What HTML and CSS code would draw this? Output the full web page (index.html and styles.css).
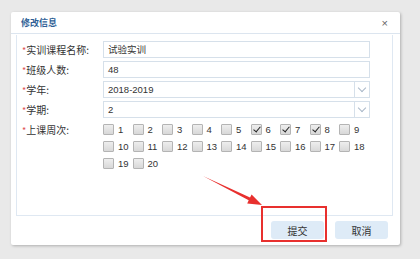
FILE: index.html
```html
<!DOCTYPE html>
<html lang="zh">
<head>
    <meta charset="UTF-8">
    <title>修改信息</title>
    <link rel="stylesheet" href="styles.css">
</head>
<body>
    <div class="dialog">
        <div class="dialog-header">
            <span class="dialog-title">修改信息</span>
            <span class="dialog-close">×</span>
        </div>

        <div class="panel">
            <div class="form-row">
                <label><i>*</i>实训课程名称:</label>
                <div class="field">试验实训</div>
            </div>
            <div class="form-row">
                <label><i>*</i>班级人数:</label>
                <div class="field">48</div>
            </div>
            <div class="form-row">
                <label><i>*</i>学年:</label>
                <div class="field select">2018-2019<span class="arrow"></span></div>
            </div>
            <div class="form-row">
                <label><i>*</i>学期:</label>
                <div class="field select">2<span class="arrow"></span></div>
            </div>
            <div class="form-row weeks-row">
                <label><i>*</i>上课周次:</label>
                <div class="weeks">
                    <span class="week"><b class="box"></b>1</span>
                    <span class="week"><b class="box"></b>2</span>
                    <span class="week"><b class="box"></b>3</span>
                    <span class="week"><b class="box"></b>4</span>
                    <span class="week"><b class="box"></b>5</span>
                    <span class="week"><b class="box checked"></b>6</span>
                    <span class="week"><b class="box checked"></b>7</span>
                    <span class="week"><b class="box checked"></b>8</span>
                    <span class="week"><b class="box"></b>9</span>
                    <span class="week"><b class="box"></b>10</span>
                    <span class="week"><b class="box"></b>11</span>
                    <span class="week"><b class="box"></b>12</span>
                    <span class="week"><b class="box"></b>13</span>
                    <span class="week"><b class="box"></b>14</span>
                    <span class="week"><b class="box"></b>15</span>
                    <span class="week"><b class="box"></b>16</span>
                    <span class="week"><b class="box"></b>17</span>
                    <span class="week"><b class="box"></b>18</span>
                    <span class="week"><b class="box"></b>19</span>
                    <span class="week"><b class="box"></b>20</span>
                </div>
            </div>
        </div>

        <div class="dialog-footer">
            <button class="btn">提交</button>
            <button class="btn">取消</button>
        </div>
    </div>

    <!-- annotation over the screenshot -->
    <div class="mark-box"></div>
    <svg class="mark-arrow" width="420" height="259" viewBox="0 0 420 259">
        <polygon points="203,176 250.05,197.55 251.6,194.4 262,205 247.2,203.4 248.7,200.25" fill="#e8302e"/>
    </svg>
</body>
</html>
```

FILE: styles.css
```css
body {
    margin: 0;
    width: 420px;
    height: 259px;
    background-color: #e9e9e9;
    font-family: "Liberation Sans", "Noto Sans CJK SC", sans-serif;
    color: #333;
    overflow: hidden;
    position: relative;
}

.dialog {
    margin: 12px 0 0 11px;
    width: 389px;
    height: 233px;
    background-color: #fff;
    border-radius: 2px;
    box-shadow: 1px 1px 3px rgba(0, 0, 0, 0.25);
    box-sizing: border-box;
    padding: 0 7px 0 5px;
}

.dialog-header {
    height: 21px;
    display: flex;
    align-items: center;
    justify-content: space-between;
    border-bottom: 1px solid #dce5ef;
    margin: 0 -7px 0 -5px;
    padding: 0 12px 0 10px;
}

.dialog-title {
    font-size: 9px;
    font-weight: bold;
    color: #2f5f96;
    font-family: "Noto Sans CJK SC", sans-serif;
}

.dialog-close {
    font-size: 11px;
    color: #666;
}

.panel {
    margin-top: 1px;
    height: 181px;
    border: 1px solid #dfe8f2;
    border-top: none;
    box-sizing: border-box;
    padding: 6px 0 0 5px;
    display: flex;
    flex-direction: column;
    gap: 3px;
}

.form-row {
    display: flex;
    align-items: center;
    height: 17px;
}

.form-row label {
    width: 81px;
    flex: none;
    font-size: 10px;
    font-family: "Noto Sans CJK SC", sans-serif;
    color: #333;
}

.form-row label i {
    font-style: normal;
    color: #e05050;
    font-size: 9px;
}

.field {
    width: 267px;
    height: 17px;
    box-sizing: border-box;
    border: 1px solid #d6e0ea;
    background-color: #fff;
    font-size: 9.5px;
    line-height: 15px;
    padding-left: 4px;
    font-family: "Liberation Sans", "Noto Sans CJK SC", sans-serif;
    color: #333;
    position: relative;
}

.field.select .arrow {
    position: absolute;
    right: 0;
    top: 0;
    width: 14px;
    height: 15px;
    border-left: 1px solid #d6e0ea;
}

.field.select .arrow::after {
    content: "";
    position: absolute;
    left: 4px;
    top: 3px;
    width: 5px;
    height: 5px;
    border-right: 1px solid #aab8c8;
    border-bottom: 1px solid #aab8c8;
    transform: rotate(45deg);
}

.weeks-row {
    align-items: flex-start;
    height: auto;
    margin-top: 1px;
}

.weeks-row label {
    line-height: 15px;
}

.weeks {
    display: grid;
    grid-template-columns: repeat(9, 29.5px);
    row-gap: 2px;
}

.week {
    display: flex;
    align-items: center;
    height: 15px;
    font-size: 9.5px;
    color: #333;
}

.box {
    width: 9px;
    height: 9px;
    border: 1px solid #b4b4b4;
    border-radius: 1px;
    background: linear-gradient(#eee, #d8d8d8);
    margin-right: 4px;
    position: relative;
}

.box.checked::after {
    content: "";
    position: absolute;
    left: 3px;
    top: 0;
    width: 3px;
    height: 6px;
    border-right: 1.5px solid #222;
    border-bottom: 1.5px solid #222;
    transform: rotate(40deg);
}

.dialog-footer {
    display: flex;
    justify-content: flex-end;
    gap: 11px;
    padding-top: 5px;
    padding-right: 5px;
}

.btn {
    width: 53px;
    height: 18px;
    border: none;
    border-radius: 3px;
    background-color: #deebf7;
    color: #333;
    font-size: 10px;
    font-family: "Noto Sans CJK SC", sans-serif;
    padding: 0;
}

.mark-box {
    position: absolute;
    left: 261px;
    top: 206px;
    width: 66px;
    height: 36px;
    box-sizing: border-box;
    border: 2px solid #e8302e;
}

.mark-arrow {
    position: absolute;
    left: 0;
    top: 0;
}
```
